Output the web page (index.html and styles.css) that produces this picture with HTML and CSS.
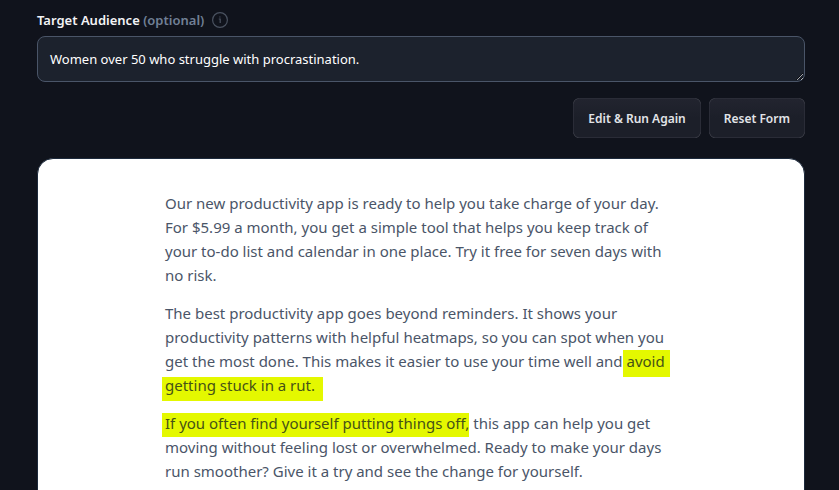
FILE: index.html
```
<!DOCTYPE html>
<html lang="en">
<head>
    <meta charset="UTF-8">
    <meta name="viewport" content="width=device-width, initial-scale=1.0">
    <title>Target Audience</title>
    <link rel="stylesheet" href="styles.css">
</head>

<body>
    <main class="container">
        <form class="audience-form">
            <div class="field-header">
                <label for="audience">Target Audience <span class="optional">(optional)</span></label>
                <svg class="info-icon" viewBox="0 0 16 16" width="16" height="16" aria-hidden="true">
                    <circle cx="8" cy="8" r="7.4" />
                    <path d="M6.8 7h1.4v4" />
                    <path d="M7.3 5h1.2" />
                </svg>
            </div>
            <textarea id="audience" name="audience" rows="1">Women over 50 who struggle with procrastination.</textarea>

            <div class="button-container">
                <button type="button" class="button">Edit &amp; Run Again</button>
                <button type="reset" class="button">Reset Form</button>
            </div>
        </form>

        <section class="result">
            <div class="result-text">
                <p>Our new productivity app is ready to help you take charge of your day. For $5.99 a month, you get a simple tool that helps you keep track of your to-do list and calendar in one place. Try it free for seven days with no risk.</p>
                <p>The best productivity app goes beyond reminders. It shows your productivity patterns with helpful heatmaps, so you can spot when you get the most done. This makes it easier to use your time well and<mark class="mark-word"> avoid</mark> <mark class="mark-line mark-end">getting stuck in a rut.</mark></p>
                <p><mark class="mark-line mark-start">If you often find yourself putting things off,</mark> this app can help you get moving without feeling lost or overwhelmed. Ready to make your days run smoother? Give it a try and see the change for yourself.</p>
            </div>
        </section>
    </main>
</body>
</html>
```

FILE: styles.css
```
* {
    box-sizing: border-box;
}

body {
    margin: 0;
    background-color: #10131c;
    font-family: "Noto Sans", "Open Sans", sans-serif;
}

.container {
    padding: 10px 34px 0 37px;
}

.field-header {
    display: flex;
    align-items: center;
    gap: 8px;
    height: 20px;
    margin-bottom: 6px;
}

label {
    color: #f3f4f6;
    font-size: 13px;
    font-weight: 600;
    line-height: 20px;
}

.optional {
    color: #718096;
}

.info-icon {
    fill: none;
    stroke: #4a5260;
    stroke-width: 1.2;
}

textarea {
    display: block;
    width: 100%;
    height: 46px;
    padding: 12px;
    border: 1px solid #4a5568;
    border-radius: 8px;
    outline: none;
    background-color: #1c222d;
    color: #ffffff;
    font-family: inherit;
    font-size: 13px;
    line-height: 20px;
    resize: vertical;
    overflow: hidden;
}

.button-container {
    display: flex;
    justify-content: flex-end;
    gap: 8px;
    margin-top: 16px;
}

.button {
    height: 40px;
    padding: 0 14px;
    border: 1px solid #2a2c37;
    border-radius: 6px;
    background-image: linear-gradient(#22242f, #1c1f29 50%);
    color: #e2e4e8;
    font-family: inherit;
    font-size: 12px;
    font-weight: 600;
    cursor: pointer;
}

/* Result card */
.result {
    margin-top: 20px;
    padding: 32px 24px;
    border: 1px solid #1d2a3c;
    border-radius: 16px;
    background-color: #ffffff;
}

.result-text {
    max-width: 512px;
    margin: 0 auto;
    color: #4a5568;
    font-size: 15px;
    line-height: 24px;
}

.result-text p {
    margin: 0 0 14px;
}

/* Highlighter strokes */
mark {
    background: linear-gradient(#e4f800, #e4f800) bottom / 100% calc(100% - 2px) no-repeat;
    color: #465217;
}

.mark-word {
    margin-right: -5px;
    padding: 3px 5px 6px 0;
}

.mark-line {
    margin-left: -3px;
    padding: 0 0 6px 3px;
}

.mark-start {
    padding-top: 2px;
    padding-bottom: 4px;
}

.mark-end {
    padding-right: 8px;
}
```
